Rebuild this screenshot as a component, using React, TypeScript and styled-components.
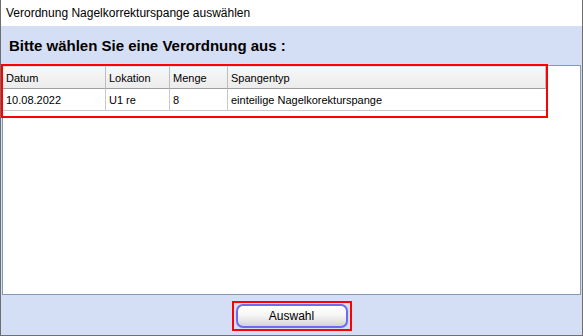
import React from 'react'
import styled, { createGlobalStyle } from 'styled-components'

const GlobalStyle = createGlobalStyle`
  html, body {
    margin: 0;
    padding: 0;
    background: #ffffff;
  }
  body {
    font-family: 'Liberation Sans', Arial, sans-serif;
    color: #000;
  }
`

const Window = styled.div`
  box-sizing: border-box;
  width: 583px;
  height: 336px;
  border: 1px solid #6e6e6e;
  border-top: none;
  display: flex;
  flex-direction: column;
  background: #d4def4;
`

const TitleBar = styled.div`
  height: 26px;
  flex: none;
  display: flex;
  align-items: center;
  padding-left: 5px;
  background: #ffffff;
  font-size: 12px;
`

const HeaderBand = styled.div`
  height: 39px;
  flex: none;
  display: flex;
  align-items: center;
  padding-left: 8px;
  font-size: 15px;
  font-weight: bold;
`

const Body = styled.div`
  flex: 1;
  padding: 0 1px;
  display: flex;
`

const ListPanel = styled.div`
  flex: 1;
  border: 1px solid #7f9db9;
  background: #ffffff;
`

const TableWrap = styled.div`
  width: 543px;
  padding-bottom: 5px;
  outline: 2px solid #ff0000;
`

const Grid = styled.div`
  display: grid;
  grid-template-columns: 103px 64px 58px 1fr;
`

const HeadCell = styled.div`
  height: 21px;
  display: flex;
  align-items: center;
  padding-left: 3px;
  font-size: 11px;
  background: linear-gradient(to bottom, #f7f7f7, #ececec);
  border-top: 1px solid #e2e2e2;
  border-bottom: 1px solid #a0a0a0;
  border-right: 1px solid #bdbdbd;
  &:last-child {
    border-right: none;
  }
`

const Cell = styled.div`
  height: 21px;
  display: flex;
  align-items: center;
  padding-left: 3px;
  font-size: 11px;
  border-bottom: 1px solid #c9c9c9;
  border-right: 1px solid #c9c9c9;
  &:last-child {
    border-right: none;
  }
`

const Footer = styled.div`
  height: 40px;
  flex: none;
  display: flex;
  align-items: center;
  justify-content: center;
`

const ButtonFrame = styled.div`
  border: 2px solid #ff0000;
  padding: 1px 2px;
  margin-top: 1px;
`

const Button = styled.button`
  box-sizing: border-box;
  width: 112px;
  height: 24px;
  border: 2px solid #6b6bf2;
  border-radius: 7px;
  background: linear-gradient(to bottom, #ffffff 0%, #f6f6f6 45%, #e4e4e4 75%, #d2d2d2 100%);
  font-family: 'Liberation Sans', Arial, sans-serif;
  font-size: 12px;
  color: #000;
  padding: 0;
  cursor: pointer;
`

const columns = ['Datum', 'Lokation', 'Menge', 'Spangentyp']
const rows = [['10.08.2022', 'U1 re', '8', 'einteilige Nagelkorekturspange']]

export default function App() {
  return (
    <>
      <GlobalStyle />
      <Window>
        <TitleBar>Verordnung Nagelkorrekturspange auswählen</TitleBar>
        <HeaderBand>Bitte wählen Sie eine Verordnung aus :</HeaderBand>
        <Body>
          <ListPanel>
            <TableWrap>
              <Grid>
                {columns.map((c) => (
                  <HeadCell key={c}>{c}</HeadCell>
                ))}
                {rows.map((r) =>
                  r.map((v, i) => <Cell key={i}>{v}</Cell>)
                )}
              </Grid>
            </TableWrap>
          </ListPanel>
        </Body>
        <Footer>
          <ButtonFrame>
            <Button>Auswahl</Button>
          </ButtonFrame>
        </Footer>
      </Window>
    </>
  )
}
